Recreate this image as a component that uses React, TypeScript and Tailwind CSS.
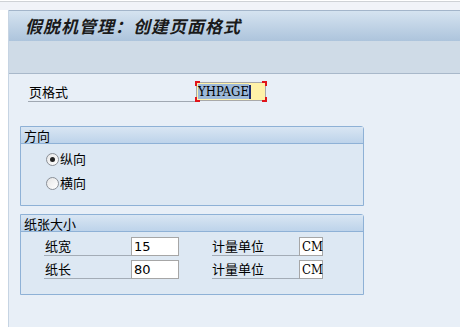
const cjk = "font-[family-name:'SimSun','Noto_Sans_CJK_SC',sans-serif]";
const serifMono = "font-[family-name:'DejaVu_Serif_Condensed','Liberation_Serif',serif]";

function GroupBox({ title, children, h }: { title: string; children: React.ReactNode; h: string }) {
  return (
    <div className={`ml-[11px] w-[344px] ${h} border border-[#8eb1d6] rounded-tr-[3px] bg-[#dde8f3] flex flex-col`}>
      <div className="h-[17px] shrink-0 bg-gradient-to-b from-[#d9e6f3] to-[#bdd3ea] border-b border-[#8eb1d6] pl-[3px] text-[13px] leading-[17px] text-black">
        {title}
      </div>
      {children}
    </div>
  );
}

function Radio({ checked, label }: { checked?: boolean; label: string }) {
  return (
    <div className="flex items-center h-[24px]">
      <span className="w-[13px] h-[13px] rounded-full border border-[#8a8f96] bg-gradient-to-br from-[#e6e6e6] to-white flex items-center justify-center">
        {checked && <span className="w-[5px] h-[5px] rounded-full bg-[#222]" />}
      </span>
      <span className="ml-[1px] text-[13px] text-black">{label}</span>
    </div>
  );
}

function SizeRow({ label, value }: { label: string; value: string }) {
  return (
    <div className="flex items-center h-[23px]">
      <div className="w-[87px] h-[18px] border-b border-[#a3acb6] text-[13px] leading-[16px] pl-[1px]">{label}</div>
      <div className="w-[48px] h-[19px] bg-white border border-[#a6a6a6] text-[13px] leading-[17px] pl-[2px] font-[family-name:'DejaVu_Sans',sans-serif]">
        {value}
      </div>
      <div className="ml-[33px] w-[87px] h-[18px] border-b border-[#a3acb6] text-[13px] leading-[16px]">计量单位</div>
      <div className={`w-[24px] h-[19px] bg-white border border-[#a6a6a6] text-[13px] leading-[17px] pl-[2px] ${serifMono}`}>
        CM
      </div>
    </div>
  );
}

export default function App() {
  return (
    <div className={`w-[460px] h-[327px] bg-white overflow-hidden flex flex-col ${cjk}`}>
      <div className="h-[1px] shrink-0" />
      <div className="h-[1px] shrink-0 bg-[#cfd2d6]" />
      <div className="h-[8px] shrink-0 bg-[#f1f3f8]" />
      <div className="flex-1 ml-[8px] border-l border-[#c6d4e3] flex flex-col">
        <div className="h-[31px] shrink-0 border-t border-[#a3b5ca] bg-gradient-to-b from-[#d5e3f0] to-[#adc4dc] pl-[16px] flex items-center">
          <span className="text-[17px] font-bold italic text-[#1a1a1a] tracking-[1px]">假脱机管理：创建页面格式</span>
        </div>
        <div className="h-[33px] shrink-0 bg-[#cfdbe7] border-b border-[#a8b8ca]" />
        <div className="flex-1 bg-[#e8eff7] flex flex-col">
          <div className="mt-[8px] flex items-end pl-[19px]">
            <div className="w-[168px] h-[19px] border-b border-[#a0a8b2] text-[13px] leading-[17px] pl-[1px]">页格式</div>
            <div className="relative w-[70px] h-[19px] bg-[#fff2a8] border border-[#a9a9a9] flex items-center pl-[1px] mb-[1px]">
              <span className={`bg-[#9cb8d8] text-[13px] leading-[15px] text-black ${serifMono}`}>YHPAGE</span>
              <span className="w-[2px] h-[14px] bg-[#1c2a6e]" />
              <span className="absolute -left-[2px] -top-[2px] w-[5px] h-[5px] border-l-2 border-t-2 border-[#e0141a]" />
              <span className="absolute -right-[2px] -top-[2px] w-[5px] h-[5px] border-r-2 border-t-2 border-[#e0141a]" />
              <span className="absolute -left-[2px] -bottom-[2px] w-[5px] h-[5px] border-l-2 border-b-2 border-[#e0141a]" />
              <span className="absolute -right-[2px] -bottom-[2px] w-[5px] h-[5px] border-r-2 border-b-2 border-[#e0141a]" />
            </div>
          </div>
          <div className="mt-[24px]">
            <GroupBox title="方向" h="h-[80px]">
              <div className="pl-[25px] pt-[3px]">
                <Radio checked label="纵向" />
                <Radio label="横向" />
              </div>
            </GroupBox>
          </div>
          <div className="mt-[8px]">
            <GroupBox title="纸张大小" h="h-[81px]">
              <div className="pl-[23px] pt-[3px]">
                <SizeRow label="纸宽" value="15" />
                <SizeRow label="纸长" value="80" />
              </div>
            </GroupBox>
          </div>
        </div>
      </div>
    </div>
  );
}
